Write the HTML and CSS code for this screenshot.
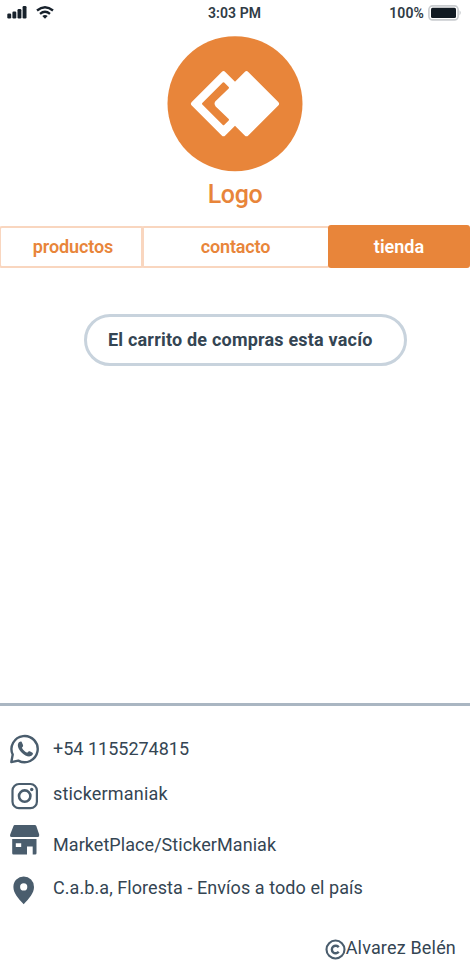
FILE: index.html
```html
<!DOCTYPE html>
<html lang="es">
<head>
<meta charset="utf-8">
<title>Tienda</title>
<link rel="stylesheet" href="styles.css">
</head>
<body>
<header class="status">
  <div class="signals">
    <svg width="20" height="14" viewBox="0 0 20 14" fill="#17212b"><rect x=".3" y="8.500" width="3.900" height="5" rx="1.200"/><rect x="5.400" y="6.500" width="3.900" height="7" rx="1.200"/><rect x="10.500" y="4" width="3.900" height="9.500" rx="1.200"/><rect x="15.600" y="1" width="3.900" height="12.500" rx="1.200"/></svg>
    <svg width="18" height="14" viewBox="0 0 18 14" fill="none" stroke="#17212b" stroke-width="2.300"><path d="M1 5.500Q9-1.100 17 5.500M4 8.800Q9 4.700 14 8.800"/><path d="M6.300 11Q9 9 11.700 11L9 13.700Z" fill="#17212b" stroke="none"/></svg>
  </div>
  <span class="clock">3:03 PM</span>
  <div class="power"><span class="percent">100%</span>
    <svg width="34" height="16" viewBox="0 0 34 16"><rect x=".9" y=".9" width="29.200" height="14" rx="3.600" fill="#fff" stroke="#c9cccf" stroke-width="1.600"/><rect x="3" y="2.700" width="25" height="10.400" rx="1.500" fill="#111a22"/><path d="M31.500 5.200Q34.200 7.800 31.500 10.400Z" fill="#c9cccf"/></svg>
  </div>
</header>
<section class="brand">
  <svg width="136" height="136" viewBox="0 0 136 136"><circle cx="68" cy="67.700" r="67.500" fill="#e8853a"/><g fill="#fff" stroke="#fff" stroke-width="5" stroke-linejoin="round"><path d="M56.500 37.700 26.500 67.700l30 30 30-30Z"/><path d="M79.500 37.700 49.500 67.700l30 30 30-30Z"/></g><path d="M56.500 47.200 36 67.700l20.500 20.500 4.500-4.500L48 71.200Q45 67.700 48 64.200L61 51.700Z" fill="#e8853a" stroke="#e8853a" stroke-width="2" stroke-linejoin="round"/></svg>
  <h1>Logo</h1>
</section>
<nav>
  <a class="tab products"><span>productos</span></a>
  <a class="tab contact"><span>contacto</span></a>
  <a class="tab active"><span>tienda</span></a>
</nav>
<main><p class="notice"><span>El carrito de compras esta vacío</span></p></main>
<footer>
  <ul>
    <li class="phone"><svg width="32" height="32" viewBox="0 0 32 32"><path d="M3.700 21.600A13.100 13.100 0 1 1 9.300 27.600L2.300 29.100Z" fill="none" stroke="#4a5d6d" stroke-width="2.400" stroke-linejoin="round"/><path d="M9.300 10.300c.7-1.400 2.600-2.500 3.400-1.300l1.300 3c.4 1-.2 1.800-1.100 2.700 1.300 2.400 3 4 5.400 5 1-1.300 1.600-1.800 2.500-1.400l2.700 1.400c1.200 1-.2 2.800-1.700 3.400-2.600 1-6.100-.6-9-3.400-3.200-3.100-4.800-6.700-3.500-9.400Z" fill="#4a5d6d"/></svg><span>+54 1155274815</span></li>
    <li class="insta"><svg width="32" height="32" viewBox="0 0 32 32"><rect x="3.500" y="5" width="24.400" height="24.200" rx="6.500" fill="none" stroke="#4a5d6d" stroke-width="2.200"/><circle cx="15.700" cy="17.100" r="5.700" fill="none" stroke="#4a5d6d" stroke-width="2.600"/><circle cx="22.700" cy="10.500" r="1.700" fill="#4a5d6d"/></svg><span>stickermaniak</span></li>
    <li class="market"><svg width="32" height="32" viewBox="0 0 32 32" fill="#4a5d6d"><path d="M5.800 0h20q1 0 1.500 1l2.900 8.500q.4 2.500-1.300 2.500H2.500Q.6 12 1.200 9.500L4.500 1q.3-1 1.300-1ZM3.200 14h24.300v14.200q0 1.300-1.300 1.300h-2.500V21.500H18v8H4.400q-1.200 0-1.200-1.300V14Zm3.600 4.200v3.800h5.400v-3.800Z" fill-rule="evenodd"/></svg><span>MarketPlace/StickerManiak</span></li>
    <li class="address"><svg width="32" height="32" viewBox="0 0 32 32"><path fill-rule="evenodd" d="M14.700 1.500a10.300 10.300 0 0 0-10.300 10.500c0 6 4.800 11.500 10.300 17.200C20.200 23.500 25 18 25 12A10.300 10.300 0 0 0 14.700 1.500Zm0 6.800a3.600 3.600 0 1 1 0 7.200 3.600 3.600 0 0 1 0-7.200Z" fill="#4a5d6d"/></svg><span>C.a.b.a, Floresta - Envíos a todo el país</span></li>
  </ul>
  <div class="credit"><svg width="21" height="21" viewBox="0 0 21 21" fill="none" stroke="#4a5d6d" stroke-width="2.100"><circle cx="10.500" cy="10.500" r="9"/><path d="M13.700 8.200a3.800 3.800 0 1 0 0 4.600" stroke-width="2.400"/></svg><span>Alvarez Belén</span></div>
</footer>
</body>
</html>
```
FILE: styles.css
```css
* { box-sizing: border-box; }
body { margin: 0; width: 470px; height: 965px; display: flex; flex-direction: column; overflow: hidden; background: #fff; color: #344553; font: 18px/24px Roboto, sans-serif; }
svg { display: block; flex: none; }
span { white-space: nowrap; }
.status { height: 36px; padding: 5px 8px 0 7px; display: grid; grid-template-columns: 1fr auto 1fr; font-size: 14px; line-height: 17px; font-weight: 600; color: #303b45; align-items: start; }
.signals { display: flex; gap: 9px; }
.power { display: flex; justify-content: flex-end; gap: 4px; }
.clock, .percent { letter-spacing: .1px; }
.brand { height: 189px; display: flex; flex-direction: column; align-items: center; color: #e8853a; }
h1 { margin: 6px 0 0; font-size: 25px; line-height: 33px; font-weight: 500; letter-spacing: -.4px; }
nav { height: 43px; display: flex; }
.tab { height: 43px; display: flex; align-items: center; justify-content: center; border: 2px solid #f9d6bf; border-radius: 3px; color: #e8853a; font-weight: 600; }
.products { width: 144px; padding-left: 3px; letter-spacing: -.1px; }
.contact { width: 189px; margin-left: -3px; letter-spacing: -.15px; }
.active { width: 142px; margin-left: -2px; background: #e8853a; border-color: #e8853a; color: #fff; }
.products, .contact { height: 42px; margin-top: 1px; }
.products { margin-left: -1px; width: 145px; }
main { height: 435px; padding: 46px 0 0 84px; }
.notice { margin: 0; width: 323px; height: 52px; border: 3px solid #c8d3dd; border-radius: 26px; display: flex; align-items: center; padding-left: 21px; font-weight: 700; letter-spacing: .2px; }
footer { border-top: 3px solid #aab6c2; flex: 1; }
ul { list-style: none; margin: 0; padding: 27px 0 0 9px; }
li { display: flex; gap: 12px; }
.phone, .insta { height: 46px; }
.phone span { margin-top: 4px; }
.insta span { margin-top: 3px; letter-spacing: .18px; }
.market { height: 50px; }
.market span { margin-top: 8px; letter-spacing: .06px; }
.address { height: 32px; }
.address span { margin-top: 1px; letter-spacing: .07px; }
.credit { display: flex; justify-content: flex-end; margin-top: 29px; padding-right: 14px; letter-spacing: .18px; }
.credit svg { margin-top: 3px; }
```
